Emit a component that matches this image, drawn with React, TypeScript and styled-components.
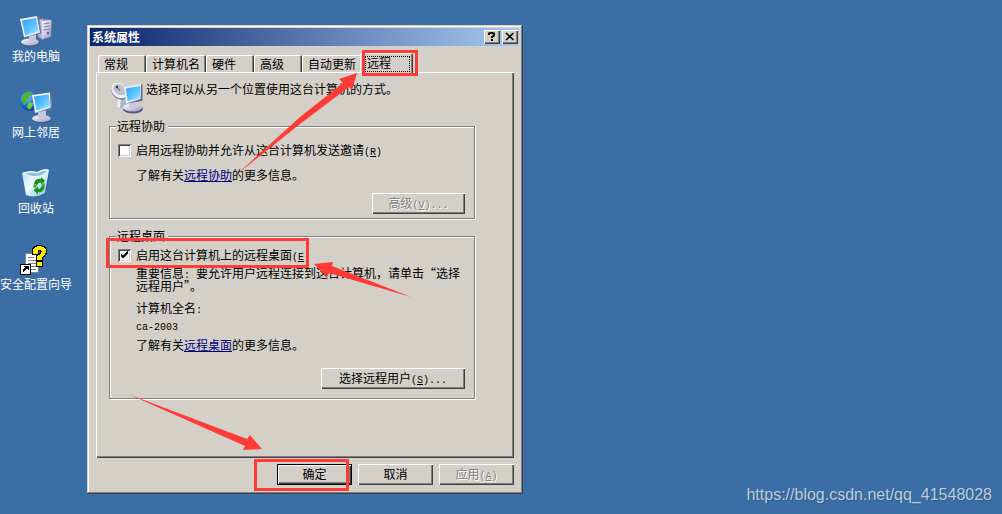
import React from 'react';
import styled, { createGlobalStyle, css } from 'styled-components';

const face = '#d4d0c8';
const shadow = '#808080';
const dark = '#404040';
const marker = '#ff3b38';

const GlobalStyle = createGlobalStyle`
  * { box-sizing: border-box; }
  body {
    margin: 0;
    background: #3a6ea5;
    font: 12px/14px "Noto Sans CJK SC", "Liberation Sans", sans-serif;
    color: #000;
  }
  button, input { font: inherit; color: inherit; }
`;

const Desktop = styled.main`
  position: relative;
  display: flex;
  align-items: flex-start;
  gap: 15px;
  min-height: 100vh;
  background: #3a6ea5;
`;

const Shortcuts = styled.nav`
  display: flex;
  flex: none;
  flex-direction: column;
  gap: 26px;
  width: 72px;
  padding-top: 15px;
`;

const Shortcut = styled.button`
  display: flex;
  flex-direction: column;
  align-items: center;
  padding: 0;
  border: 0;
  background: none;
  color: #fff;
  line-height: 18px;
  white-space: nowrap;

  svg { display: block; }
`;

const Dialog = styled.section`
  position: relative;
  flex: none;
  width: 436px;
  margin: 25px 0 20px;
  padding: 3px 4px 3px 3px;
  background: ${face};
  box-shadow: inset -1px -1px ${dark}, inset 1px 1px ${face}, inset -2px -2px ${shadow},
    inset 2px 2px #fff;
`;

const TitleBar = styled.header`
  display: flex;
  align-items: center;
  gap: 2px;
  height: 18px;
  padding: 0 1px 0 2px;
  background: linear-gradient(90deg, #0a246a, #a6caf0);
`;

const Title = styled.h1`
  flex: 1;
  margin: 0;
  color: #fff;
  font-size: 12px;
  font-weight: 700;
`;

const raised = css`
  border: 0;
  background: ${face};
  box-shadow: inset 1px 1px #fff, inset -1px -1px ${dark}, inset -2px -2px ${shadow};
`;

const CaptionButton = styled.button`
  ${raised}
  width: 16px;
  height: 14px;
  padding: 0;

  svg { display: block; }
`;

const Tabs = styled.div`
  display: flex;
  align-items: flex-end;
  margin-top: 7px;
  padding-left: 8px;
`;

const Tab = styled.button<{ $wide?: boolean; $active?: boolean }>`
  width: ${p => (p.$wide ? 60 : 48)}px;
  height: 17px;
  padding: 0 0 0 6px;
  border: 0;
  border-radius: 2px 2px 0 0;
  background: ${face};
  box-shadow: inset 1px 1px #fff, inset -1px 0 ${dark}, inset -2px 0 ${shadow};
  text-align: left;
  white-space: nowrap;
  ${p => p.$active && css`
    position: relative;
    z-index: 1;
    width: 53px;
    height: 20px;
    margin: 0 0 -1px -2px;
    padding: 3px 3px 1px 5px;
  `}
`;

const FocusMark = styled.span`
  display: block;
  height: 16px;
  padding-left: 1px;
  border: 1px dotted #000;
  line-height: 12px;
`;

const Panel = styled.div`
  margin: 0 5px 0 6px;
  padding: 10px 39px 59px 13px;
  box-shadow: inset 1px 1px #fff, inset -1px -1px ${dark}, inset -2px -2px ${shadow};
`;

const Intro = styled.div`
  display: flex;
  gap: 3px;
  padding-left: 2px;

  svg { flex: none; }
  p { margin: 0; }
`;

const Group = styled.fieldset<{ $gap: number; $end: number }>`
  min-width: 0;
  margin: ${p => p.$gap}px 0 0;
  padding: 0 9px ${p => p.$end}px 8px;
  border: 1px solid ${shadow};
  box-shadow: 1px 1px #fff, inset 1px 1px #fff;
`;

const Legend = styled.legend`
  margin-left: -2px;
  padding: 0 3px 0 1px;
  background: ${face};
`;

const CheckRow = styled.label<{ $gap: number }>`
  display: flex;
  align-items: center;
  gap: 5px;
  height: 14px;
  margin-top: ${p => p.$gap}px;
  white-space: nowrap;
`;

const CheckBox = styled.input`
  flex: none;
  appearance: none;
  width: 13px;
  height: 13px;
  margin: 0;
  background: #fff;
  box-shadow: inset 1px 1px ${shadow}, inset -1px -1px #fff, inset 2px 2px ${dark},
    inset -2px -2px ${face};

  &:checked::after {
    content: '';
    display: block;
    width: 13px;
    height: 13px;
    background: #000;
    clip-path: polygon(3px 5px, 5px 7px, 10px 2px, 10px 5px, 5px 10px, 3px 8px);
  }
`;

const Line = styled.p<{ $gap: number; $tight?: boolean }>`
  margin: ${p => p.$gap}px -6px 0 0;
  padding-left: 18px;
  line-height: ${p => (p.$tight ? 13 : 14)}px;
`;

const Link = styled.a`
  color: #000080;
  text-decoration: underline;
`;

const Latin = styled.span`
  font-family: "Liberation Mono", monospace;
  font-size: 10px;
  line-height: 0;
  white-space: pre;
`;

const Actions = styled.div<{ $gap: number }>`
  display: flex;
  justify-content: flex-end;
  gap: 6px;
  margin-top: ${p => p.$gap}px;
`;

const Footer = styled(Actions)`
  padding: 0 5px 6px 0;
`;

const PushButton = styled.button<{ $size?: 'medium' | 'large'; $default?: boolean }>`
  ${raised}
  width: ${p => (p.$size === 'large' ? 144 : p.$size === 'medium' ? 93 : 75)}px;
  height: 21px;
  padding: 0 0 2px;
  line-height: 18px;
  white-space: nowrap;
  ${p => p.$default && css`
    border: 1px solid #000;
    line-height: 16px;
  `}

  &:disabled {
    color: ${shadow};
    text-shadow: 1px 1px #fff;
  }
`;

const Markup = styled.svg`
  position: absolute;
  z-index: 2;
  top: 0;
  left: 0;
  width: 436px;
  height: 469px;
  pointer-events: none;
`;

const Watermark = styled.div`
  position: absolute;
  right: 10px;
  bottom: 9px;
  color: rgba(255, 255, 255, 0.68);
  font: 16px/20px "Liberation Sans", Arial, sans-serif;
  text-shadow: 1px 1px 1px rgba(0, 0, 0, 0.2);
`;

function Gradients() {
  return (
    <svg width="0" height="0" style={{ position: 'absolute' }} aria-hidden="true">
      <defs>
        <linearGradient id="screen" x1="0" y1="0" x2="1" y2="1">
          <stop offset="0" stopColor="#2f9df5" />
          <stop offset="0.55" stopColor="#5cc4ff" />
          <stop offset="1" stopColor="#b4f2ff" />
        </linearGradient>
        <linearGradient id="plastic" x1="0" y1="0" x2="1" y2="1">
          <stop offset="0" stopColor="#ffffff" />
          <stop offset="1" stopColor="#9a9cc0" />
        </linearGradient>
        <radialGradient id="globe" cx="0.35" cy="0.3" r="0.8">
          <stop offset="0" stopColor="#8fd0ff" />
          <stop offset="0.5" stopColor="#1c6fe0" />
          <stop offset="1" stopColor="#082a8c" />
        </radialGradient>
        <linearGradient id="bin" x1="0" y1="0" x2="1" y2="1">
          <stop offset="0" stopColor="#a8dcf4" />
          <stop offset="0.45" stopColor="#f0fbff" />
          <stop offset="1" stopColor="#78b8e0" />
        </linearGradient>
      </defs>
    </svg>
  );
}

function ComputerIcon() {
  return (
    <svg width="32" height="32" viewBox="0 0 32 32" aria-hidden="true">
      <path d="M18 5 23 3.500 32 5 31 22 22 25 18 22Z" fill="#8587b0" />
      <path d="M18.500 5 23 4 23 23.500 18.500 22Z" fill="#b9bbdb" />
      <path d="M22 6 31 5 30.500 21.500 22 24Z" fill="url(#plastic)" />
      <path d="M23.500 9 29.500 8M23.500 12 29.500 11M23.500 15 29.500 14" stroke="#7679a6" />
      <circle cx="28" cy="18" r="1.200" fill="#5c5f92" />
      <ellipse cx="10.500" cy="28" rx="9.500" ry="3.800" fill="#4b4e7c" />
      <ellipse cx="10" cy="27" rx="9" ry="3.500" fill="url(#plastic)" />
      <path d="M9 19 16 18 16 26Q12 29 9 26Z" fill="#c6c8e2" />
      <path d="M0 4 17 1 20.500 18 4 22.500Z" fill="#f1f2fa" />
      <path d="M17 1 19 1.500 21.500 18.500 4 22.500 20 17.500Z" fill="#7477a4" />
      <path d="M2 5.500 16 3 18.800 16.500 5 20.500Z" fill="url(#screen)" />
    </svg>
  );
}

function NetworkIcon() {
  return (
    <svg width="32" height="32" viewBox="0 0 32 32" aria-hidden="true">
      <circle cx="10" cy="10" r="10" fill="url(#globe)" />
      <path d="M3 4Q7 0 11 1L13 3 9 5 10 8 6 9 7 12 4 14 1 9Z" fill="#4fb52d" />
      <path d="M9 11 13 12 12 16 9 19 7 16Z" fill="#72cf38" />
      <path d="M13 4 18 5 17 9 14 8Z" fill="#3b9926" />
      <ellipse cx="22" cy="28.500" rx="10" ry="3.500" fill="#4b4e7c" />
      <ellipse cx="21.500" cy="27.500" rx="9.500" ry="3.500" fill="url(#plastic)" />
      <path d="M18 20 26 19 26 26Q22 29 18 26Z" fill="#c6c8e2" />
      <path d="M12 4 30 1.500 32 17.500 15 22Z" fill="#f1f2fa" />
      <path d="M30 1.500 31.500 2 32 18 15 22 30.500 16.500Z" fill="#7477a4" />
      <path d="M14 5.500 28.500 3.500 30.300 15.500 16.500 19.500Z" fill="url(#screen)" />
    </svg>
  );
}

function RecycleIcon() {
  return (
    <svg width="32" height="32" viewBox="0 0 32 32" aria-hidden="true">
      <path d="M2 6 30 4 26 27Q16 33 6 28Z" fill="#2b4f78" opacity="0.5" />
      <path d="M2 6Q9 3 17 5 24 1 29 3L25 26Q15 32 6 28Z" fill="url(#bin)" />
      <path d="M2 6Q9 3 17 5 24 1 29 3 28 8 18 10 8 11 2 6Z" fill="#e8f8ff" />
      <path d="M5 6.500Q11 5 17 6.500 23 3 27 4 24 8 17 8.800 10 9.500 5 6.500Z" fill="#86bedf" />
      <g fill="#16921c">
        <path d="M14 17Q15 11 21 12L21 10 25 14 21 18 21 15.500Q18 15 17 18Z" />
        <path d="M24.500 19Q24 26 18 25L18 27.500 13.500 23 18 19.500 18 22Q21 22 21.500 19Z" />
      </g>
      <path d="M14 17 17 18 16 21 13 20ZM22 17 25 16 24.500 20 21.500 19Z" fill="#35b63a" />
    </svg>
  );
}

function WizardIcon() {
  return (
    <svg width="32" height="32" viewBox="0 -2 32 32" shapeRendering="crispEdges" aria-hidden="true">
      <path d="M5 8H18V27H5Z" fill="#fff" stroke="#808080" />
      <path d="M8 12H14M8 15H16M8 18H16M8 21H16M8 24H16" stroke="#808080" />
      <path
        d="M12 9V5Q14 1 19 0.500 25 0.500 26.500 5 27 10 22 13V15H16V11Q21 9 21 6.500 20 4.500 18 6V9Z"
        fill="#ffeb00"
        stroke="#000"
      />
      <path d="M16.500 16.500H22.500V21.500H16.500Z" fill="#ffeb00" stroke="#000" />
      <path d="M0.500 19.500H10.500V29.500H0.500Z" fill="#fff" stroke="#000" />
      <path d="M4 21H9V26L7 24Q4 25 4 28 1 25 5 22.500Z" fill="#000" />
    </svg>
  );
}

function RemoteIcon() {
  return (
    <svg width="32" height="32" viewBox="0 0 32 32" aria-hidden="true">
      <path d="M7 13 14 15 17 24Q12 28 6 25Z" fill="#b2b4cf" />
      <path d="M7 14 10 15 9 26 6 25Z" fill="#eceef8" />
      <ellipse cx="9" cy="9.500" rx="9.500" ry="7.500" transform="rotate(35 9 9.500)" fill="#7b7e9c" />
      <ellipse cx="8.500" cy="8.500" rx="9" ry="7" transform="rotate(38 8.500 8.500)" fill="#f0f1f6" />
      <ellipse cx="8.500" cy="7.500" rx="7" ry="5" transform="rotate(38 8.500 7.500)" fill="#bfc1cf" />
      <path d="M9 9 6 5" stroke="#555" />
      <circle cx="6" cy="5" r="1.200" fill="#333" />
      <ellipse cx="22" cy="27" rx="10" ry="4.500" fill="#555880" />
      <ellipse cx="21.500" cy="25.500" rx="9.500" ry="4" fill="url(#plastic)" />
      <path d="M18 18 25 18 25 25Q21 27 18 24Z" fill="#c6c8e2" />
      <path d="M13 5 30 2 31 18 15 21.500Z" fill="#eceef8" />
      <path d="M30 2 31.500 3 31.500 19 15 21.500 29.500 17Z" fill="#676a96" />
      <path d="M15 6.500 29 4 29.500 16 16.500 19Z" fill="url(#screen)" />
    </svg>
  );
}

const shortcuts = [
  { label: '我的电脑', Icon: ComputerIcon },
  { label: '网上邻居', Icon: NetworkIcon },
  { label: '回收站', Icon: RecycleIcon },
  { label: '安全配置向导', Icon: WizardIcon },
];

const tabs = [
  { label: '常规' },
  { label: '计算机名', wide: true },
  { label: '硬件' },
  { label: '高级' },
  { label: '自动更新', wide: true },
];

const Key = ({ letter, more = '' }: { letter: string; more?: string }) => (
  <Latin>(<u>{letter}</u>){more}</Latin>
);

export default function App() {
  return (
    <>
      <GlobalStyle />
      <Gradients />
      <Desktop>
        <Shortcuts>
          {shortcuts.map(({ label, Icon }) => (
            <Shortcut key={label} type="button">
              <Icon />
              {label}
            </Shortcut>
          ))}
        </Shortcuts>

        <Dialog role="dialog" aria-labelledby="dialog-title">
          <TitleBar>
            <Title id="dialog-title">系统属性</Title>
            <CaptionButton type="button" aria-label="帮助">
              <svg width="16" height="14" viewBox="0 0 16 14" fill="none" stroke="#000" strokeWidth="2">
                <path d="M5 5V4Q5 3 6 3H9Q10 3 10 4V5Q10 6 8 7V8M7 10H9" />
              </svg>
            </CaptionButton>
            <CaptionButton type="button" aria-label="关闭">
              <svg width="16" height="14" viewBox="0 0 16 14" stroke="#000" strokeWidth="1.600">
                <path d="M4 3 11.500 10M11.500 3 4 10" />
              </svg>
            </CaptionButton>
          </TitleBar>

          <Tabs role="tablist">
            {tabs.map(t => (
              <Tab key={t.label} type="button" role="tab" aria-selected="false" $wide={t.wide}>
                {t.label}
              </Tab>
            ))}
            <Tab type="button" role="tab" aria-selected="true" $active>
              <FocusMark>远程</FocusMark>
            </Tab>
          </Tabs>

          <Panel role="tabpanel">
            <Intro>
              <RemoteIcon />
              <p>选择可以从另一个位置使用这台计算机的方式。</p>
            </Intro>

            <Group $gap={5} $end={4}>
              <Legend>远程协助</Legend>
              <CheckRow $gap={10}>
                <CheckBox type="checkbox" />
                <span>启用远程协助并允许从这台计算机发送邀请<Key letter="R" /></span>
              </CheckRow>
              <Line $gap={11}>
                了解有关<Link href="#assistance">远程协助</Link>的更多信息。
              </Line>
              <Actions $gap={11}>
                <PushButton type="button" $size="medium" disabled>
                  高级<Key letter="V" more="..." />
                </PushButton>
              </Actions>
            </Group>

            <Group $gap={10} $end={9}>
              <Legend>远程桌面</Legend>
              <CheckRow $gap={5}>
                <CheckBox type="checkbox" defaultChecked />
                <span>启用这台计算机上的远程桌面<Key letter="E" /></span>
              </CheckRow>
              <Line $gap={4} $tight>
                重要信息<Latin>: </Latin>要允许用户远程连接到这台计算机，请单击“选择<br />
                远程用户”。
              </Line>
              <Line $gap={9}>计算机全名<Latin>:</Latin></Line>
              <Line $gap={3}><Latin>ca-2003</Latin></Line>
              <Line $gap={6}>
                了解有关<Link href="#desktop">远程桌面</Link>的更多信息。
              </Line>
              <Actions $gap={16}>
                <PushButton type="button" $size="large">
                  选择远程用户<Key letter="S" more="..." />
                </PushButton>
              </Actions>
            </Group>
          </Panel>

          <Footer $gap={6}>
            <PushButton type="button" $default>确定</PushButton>
            <PushButton type="button">取消</PushButton>
            <PushButton type="button" disabled>应用<Key letter="A" /></PushButton>
          </Footer>

          <Markup viewBox="87 25 436 469" aria-hidden="true">
            <g fill="none" stroke={marker} strokeWidth="3">
              <rect x="363.500" y="51.500" width="53" height="23" />
              <rect x="107.500" y="239.500" width="200" height="27" />
              <rect x="255.500" y="460.500" width="92" height="29" />
            </g>
            <g fill={marker}>
              <path d="M236 175 300 117 343 83 339 79 357 73 352 90 349 87 300 124Z" />
              <path d="M411 297 332 266 333 262 314 264 327 277 329 273Z" />
              <path d="M128 394 247 439 250 435 262 449 243 450 245 446Z" />
            </g>
          </Markup>
        </Dialog>

        <Watermark>https://blog.csdn.net/qq_41548028</Watermark>
      </Desktop>
    </>
  );
}
